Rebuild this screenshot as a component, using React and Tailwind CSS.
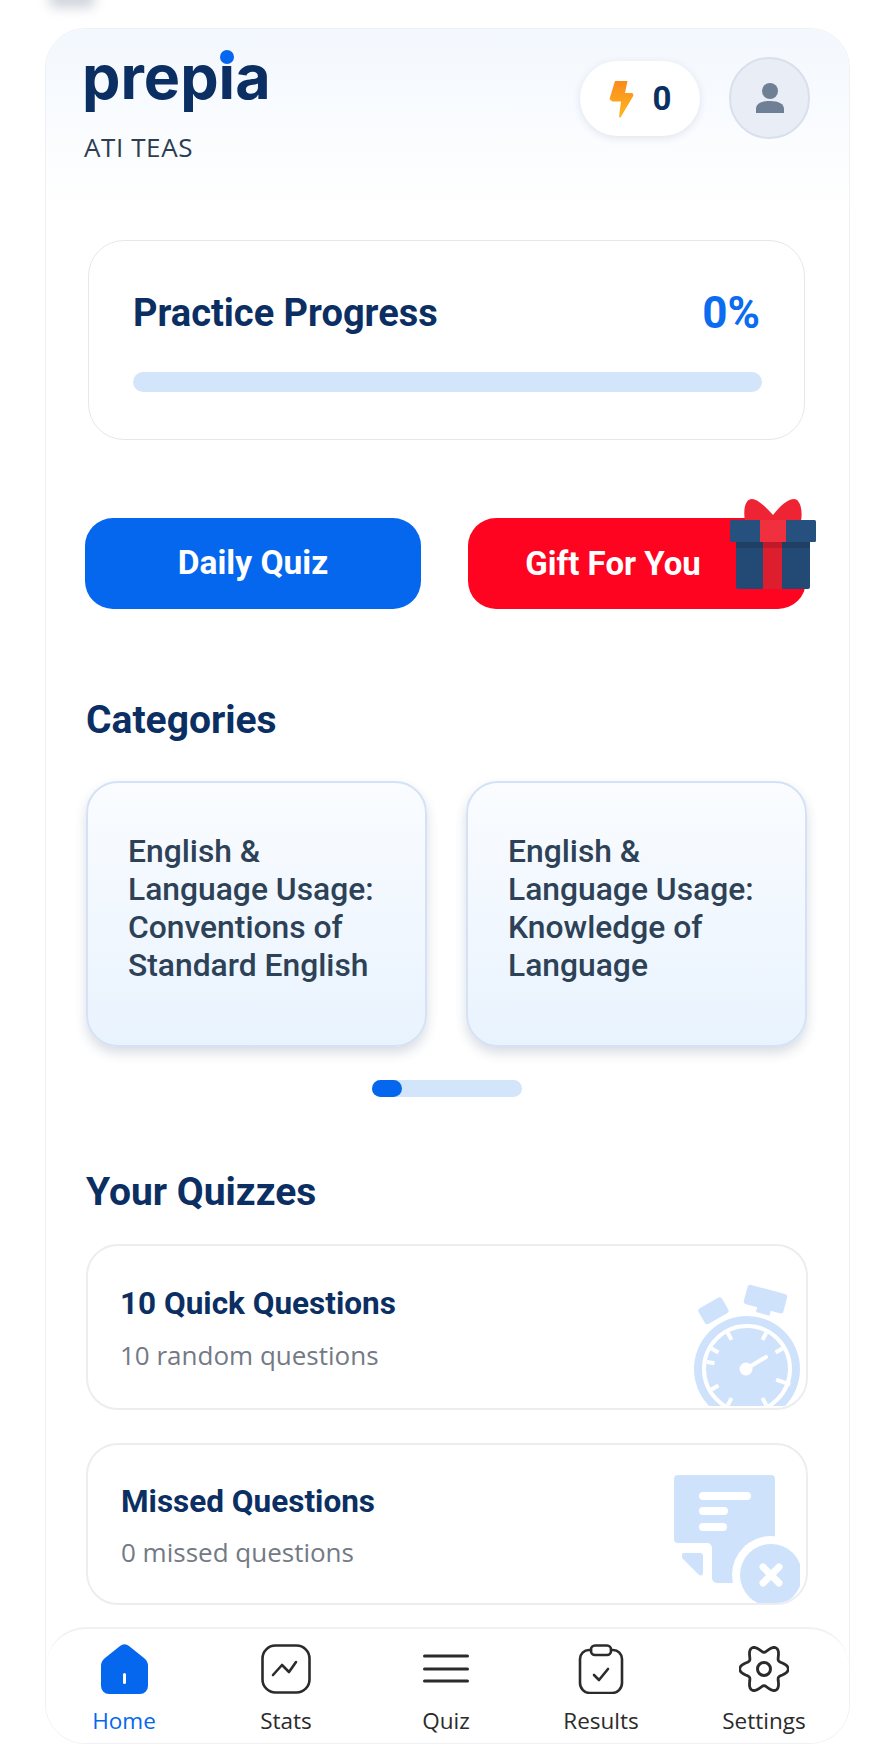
const ROBOTO = "font-['Roboto',sans-serif]"
const SOFT = "font-['Open_Sans',sans-serif]"

function Bolt() {
  return (
    <svg width="25" height="38" viewBox="0 0 25 38">
      <defs>
        <linearGradient id="bolt" x1="0" y1="0" x2="0" y2="1">
          <stop offset="0" stopColor="#fb8a1e" />
          <stop offset="1" stopColor="#fdb81c" />
        </linearGradient>
      </defs>
      <path d="M6 1h12.5l-2.5 12h7.5l1 2.5L11.5 37.5 10 37l2-15.5H3.5L0.5 19z" fill="url(#bolt)" />
    </svg>
  )
}

function Person() {
  return (
    <svg width="30" height="32" viewBox="0 0 30 32" fill="#6f7f95">
      <circle cx="15" cy="9" r="8" />
      <path d="M1 31v-4c0-5 5-8 14-8s14 3 14 8v4z" />
    </svg>
  )
}

function GiftBox() {
  return (
    <svg className="absolute right-[-10px] top-[-19px]" width="86" height="91" viewBox="731 499 86 91">
      <path d="M774 515C765 505 758 499 753 499C746 499 744 510 746 521H802C804 510 801 499 795 499C789 499 782 505 774 515z" fill="#ee2434" />
      <rect x="737" y="541" width="74" height="48" rx="2" fill="#234a74" />
      <rect x="737" y="542" width="74" height="6" fill="#1f4063" />
      <rect x="764" y="542" width="19" height="47" fill="#dc1e2e" />
      <rect x="764" y="542" width="19" height="6" fill="#c01a2a" />
      <rect x="731" y="520" width="86" height="22" rx="1.5" fill="#26507e" />
      <rect x="761" y="520" width="26" height="22" fill="#f0303f" />
    </svg>
  )
}

function Stopwatch() {
  const ticks = [
    [-62, 33, 41], [-118, 33, 41], [-150, 33, 41], [-30, 33, 41], [20, 31, 46],
    [-170, 33, 41], [150, 33, 41], [118, 33, 41], [62, 33, 41],
  ]
  return (
    <svg className="absolute right-[6px] bottom-[2px]" width="130" height="140" viewBox="670 1265 130 140">
      <rect x="745" y="1288" width="41" height="20" rx="3" fill="#cfe2fc" transform="rotate(15 765 1298)" />
      <rect x="757" y="1304" width="14" height="9" fill="#cfe2fc" transform="rotate(15 764 1308)" />
      <rect x="700" y="1301" width="27" height="18" rx="3" fill="#cfe2fc" transform="rotate(-30 713 1310)" />
      <circle cx="747" cy="1368" r="53" fill="#cfe2fc" />
      <circle cx="747" cy="1368" r="43" fill="#cfe2fc" stroke="#fff" strokeWidth="4" />
      {ticks.map(([a, r1, r2], i) => {
        const t = (a * Math.PI) / 180
        return (
          <line
            key={i}
            x1={747 + r1 * Math.cos(t)}
            y1={1368 + r1 * Math.sin(t)}
            x2={747 + r2 * Math.cos(t)}
            y2={1368 + r2 * Math.sin(t)}
            stroke="#fff"
            strokeWidth="4"
          />
        )
      })}
      <circle cx="746" cy="1368" r="6.5" fill="#fff" />
      <line x1="746" y1="1368" x2="766" y2="1356" stroke="#fff" strokeWidth="4" strokeLinecap="round" />
    </svg>
  )
}

function MissedDoc() {
  return (
    <svg className="absolute right-[6px] bottom-0" width="130" height="132" viewBox="670 1471 130 132">
      <path d="M678 1475h93a4 4 0 0 1 4 4v62a4 4 0 0 1-4 4h-26v34a4 4 0 0 1-4 4h-24a5 5 0 0 1-5-5v-30a5 5 0 0 0-5-5h-29a4 4 0 0 1-4-4v-60a4 4 0 0 1 4-4z" fill="#cfe2fc" />
      <path d="M684 1553h16a3 3 0 0 1 3 3v17c0 3-3 3-5 1l-15-15c-2-3-1-6 1-6z" fill="#cfe2fc" />
      <rect x="699" y="1492" width="52" height="8" rx="4" fill="#fff" />
      <rect x="699" y="1507" width="29" height="8" rx="4" fill="#fff" />
      <rect x="699" y="1523" width="28" height="8" rx="4" fill="#fff" />
      <circle cx="771" cy="1575" r="39" fill="#fff" />
      <circle cx="771" cy="1575" r="31" fill="#cfe2fc" />
      <path d="M763 1567l16 16M779 1567l-16 16" stroke="#fff" strokeWidth="7" strokeLinecap="round" />
    </svg>
  )
}

// gear outline: six soft lobes sampled around the centre
function gearPath() {
  const pts = []
  for (let i = 0; i < 120; i++) {
    const t = (i / 120) * Math.PI * 2
    const r = 20.5 + 3.8 * Math.cos(6 * t)
    pts.push(`${(25 + r * Math.cos(t)).toFixed(2)} ${(25 + r * Math.sin(t)).toFixed(2)}`)
  }
  return `M${pts.join('L')}z`
}

const NAV_ICONS = {
  Home: (
    <svg width="47" height="50" viewBox="0 0 47 50">
      <path d="M19 2a7 7 0 0 1 9 0L43 14a10 10 0 0 1 4 8v20a8 8 0 0 1-8 8H8a8 8 0 0 1-8-8V22a10 10 0 0 1 4-8z" fill="#0567ee" />
      <rect x="22" y="29" width="3" height="11" rx="1.5" fill="#fff" />
    </svg>
  ),
  Stats: (
    <svg width="50" height="50" viewBox="0 0 50 50" fill="none" stroke="#2b2b2b" strokeWidth="2.6" strokeLinecap="round" strokeLinejoin="round">
      <rect x="1.5" y="1.5" width="47" height="47" rx="13" />
      <path d="M12 31l9-10 7 7 7-10" />
    </svg>
  ),
  Quiz: (
    <svg width="46" height="50" viewBox="0 0 46 50" stroke="#2b2b2b" strokeWidth="3" strokeLinecap="round">
      <line x1="1.5" y1="12" x2="44.5" y2="12" />
      <line x1="1.5" y1="25" x2="44.5" y2="25" />
      <line x1="1.5" y1="37" x2="44.5" y2="37" />
    </svg>
  ),
  Results: (
    <svg width="46" height="50" viewBox="0 0 46 50" fill="none" stroke="#2b2b2b" strokeWidth="2.6" strokeLinecap="round" strokeLinejoin="round">
      <path d="M13 6H11A9 9 0 0 0 2 15v24a10 10 0 0 0 10 10h22a10 10 0 0 0 10-10V15a9 9 0 0 0-9-9h-2" />
      <rect x="13" y="1.5" width="20" height="9.5" rx="4" />
      <path d="M16 31l5 5 9-11" />
    </svg>
  ),
  Settings: (
    <svg width="50" height="50" viewBox="0 0 50 50" fill="none" stroke="#2b2b2b" strokeWidth="2.8" strokeLinecap="round" strokeLinejoin="round">
      <path d={gearPath()} />
      <circle cx="25" cy="25" r="6.5" strokeWidth="3" />
    </svg>
  ),
}

const NAV_ITEMS = ['Home', 'Stats', 'Quiz', 'Results', 'Settings']

const CATEGORIES = [
  ['English &', 'Language Usage:', 'Conventions of', 'Standard English'],
  ['English &', 'Language Usage:', 'Knowledge of', 'Language'],
]

export default function App() {
  return (
    <div className={`relative h-[1758px] w-[895px] overflow-hidden bg-white ${ROBOTO}`}>
      {/* smudge at the top of the capture */}
      <div className="absolute left-[48px] top-[-10px] h-[18px] w-[48px] rounded-full bg-gray-300 blur-[6px]" />

      <div className="mx-[45px] mt-[28px] flex h-[1716px] flex-col overflow-hidden rounded-[40px] border border-[#eff1f5]">
        {/* Header */}
        <div className="flex h-[182px] shrink-0 justify-between bg-gradient-to-b from-[#f3f8fe] to-white pl-[36px] pr-[39px]">
          <div>
            <div className="relative mt-[4px] h-[88px] text-[61px] leading-[88px] font-bold tracking-[0px] text-[#0b2f63] font-['Inter',sans-serif]">
              prepia
              <span className="absolute left-[138px] top-[17px] h-[14px] w-[14px] rounded-full bg-[#0567ee]" />
            </div>
            <div className={`ml-[2px] mt-[11px] text-[26px] leading-[30px] tracking-[0.6px] text-[#2d3e52] ${SOFT}`}>ATI TEAS</div>
          </div>
          <div className="flex items-start gap-[29px] pt-[28px]">
            <div className="mt-[4px] flex h-[75px] w-[120px] items-center justify-center gap-[19px] rounded-full bg-white shadow-[0_2px_8px_rgba(30,50,90,0.12)]">
              <Bolt />
              <span className="text-[33px] font-bold text-[#0b2f63]">0</span>
            </div>
            <div className="flex h-[82px] w-[81px] items-center justify-center rounded-full border-2 border-[#d9dfec] bg-[#e9edf5]">
              <Person />
            </div>
          </div>
        </div>

        <div className="flex-1 pl-[40px] pr-[42px]">
          {/* Practice progress */}
          <div className="ml-[2px] mt-[29px] h-[200px] w-[717px] rounded-[36px] border border-[#e4e7ec] bg-white pl-[44px] pr-[44px] pt-[47px]">
            <div className="flex items-center justify-between">
              <span className="text-[38px] leading-[50px] font-bold text-[#0b2f63]">Practice Progress</span>
              <span className="text-[44px] leading-[50px] font-bold text-[#0b6cf0]">0%</span>
            </div>
            <div className="mt-[34px] h-[20px] w-[629px] rounded-full bg-[#d3e5fb]" />
          </div>

          {/* Buttons */}
          <div className="ml-[-1px] mt-[78px] flex w-[721px] justify-between">
            <div className="flex h-[91px] w-[336px] items-center justify-center rounded-[28px] bg-[#0567ee] text-[33.5px] font-bold text-white">
              Daily Quiz
            </div>
            <div className="relative flex h-[91px] w-[338px] items-center justify-center rounded-[28px] bg-[#ff0420] pr-[48px] text-[33px] font-bold text-white">
              Gift For You
              <GiftBox />
            </div>
          </div>

          <h2 className="mt-[86px] text-[39px] leading-[50px] font-bold text-[#0b2f63]">Categories</h2>

          {/* Category cards */}
          <div className="mt-[36px] flex gap-[39px]">
            {CATEGORIES.map((lines, i) => (
              <div
                key={i}
                className="flex h-[266px] w-[342px] flex-col justify-center rounded-[32px] border-2 border-[#d5e2f5] bg-gradient-to-b from-[#fafcff] to-[#e9f3fe] pb-[12px] pl-[40px] text-[31.8px] leading-[38px] font-medium text-[#2d4257] shadow-[0_6px_12px_rgba(40,60,100,0.18)]"
              >
                {lines.map((l, j) => (
                  <span key={j}>{l}</span>
                ))}
              </div>
            ))}
          </div>

          {/* Scroll indicator */}
          <div className="ml-[286px] mt-[33px] h-[17px] w-[150px] rounded-full bg-[#d3e5fb]">
            <div className="h-[17px] w-[30px] rounded-full bg-[#0567ee]" />
          </div>

          <h2 className="mt-[70px] text-[39px] leading-[50px] font-bold text-[#0b2f63]">Your Quizzes</h2>

          {/* Quiz cards */}
          <div className="relative mt-[27px] h-[166px] w-[722px] overflow-hidden rounded-[32px] border-2 border-[#ebedf0] bg-white pl-[32px] pt-[37px]">
            <div className="text-[31.5px] leading-[42px] font-bold text-[#0b2f63]">10 Quick Questions</div>
            <div className={`mt-[13px] text-[26px] leading-[34px] text-[#737a85] ${SOFT}`}>10 random questions</div>
            <Stopwatch />
          </div>
          <div className="relative mt-[33px] h-[162px] w-[722px] overflow-hidden rounded-[32px] border-2 border-[#ebedf0] bg-white pl-[33px] pt-[36px]">
            <div className="text-[31.5px] leading-[42px] font-bold text-[#0b2f63]">Missed Questions</div>
            <div className={`mt-[12px] text-[26px] leading-[34px] text-[#737a85] ${SOFT}`}>0 missed questions</div>
            <MissedDoc />
          </div>
        </div>

        {/* Bottom nav */}
        <div className={`grid h-[116px] shrink-0 grid-cols-[156px_168px_152px_158px_168px] rounded-t-[40px] border-t-2 border-[#eff1f5] bg-white pt-[15px] ${SOFT}`}>
          {NAV_ITEMS.map(name => (
            <div key={name} className="flex flex-col items-center">
              {NAV_ICONS[name]}
              <span className={`mt-[12px] text-[22.5px] leading-[30px] ${name === 'Home' ? 'text-[#0567ee]' : 'text-[#2b2b2b]'}`}>
                {name}
              </span>
            </div>
          ))}
        </div>
      </div>
    </div>
  )
}
